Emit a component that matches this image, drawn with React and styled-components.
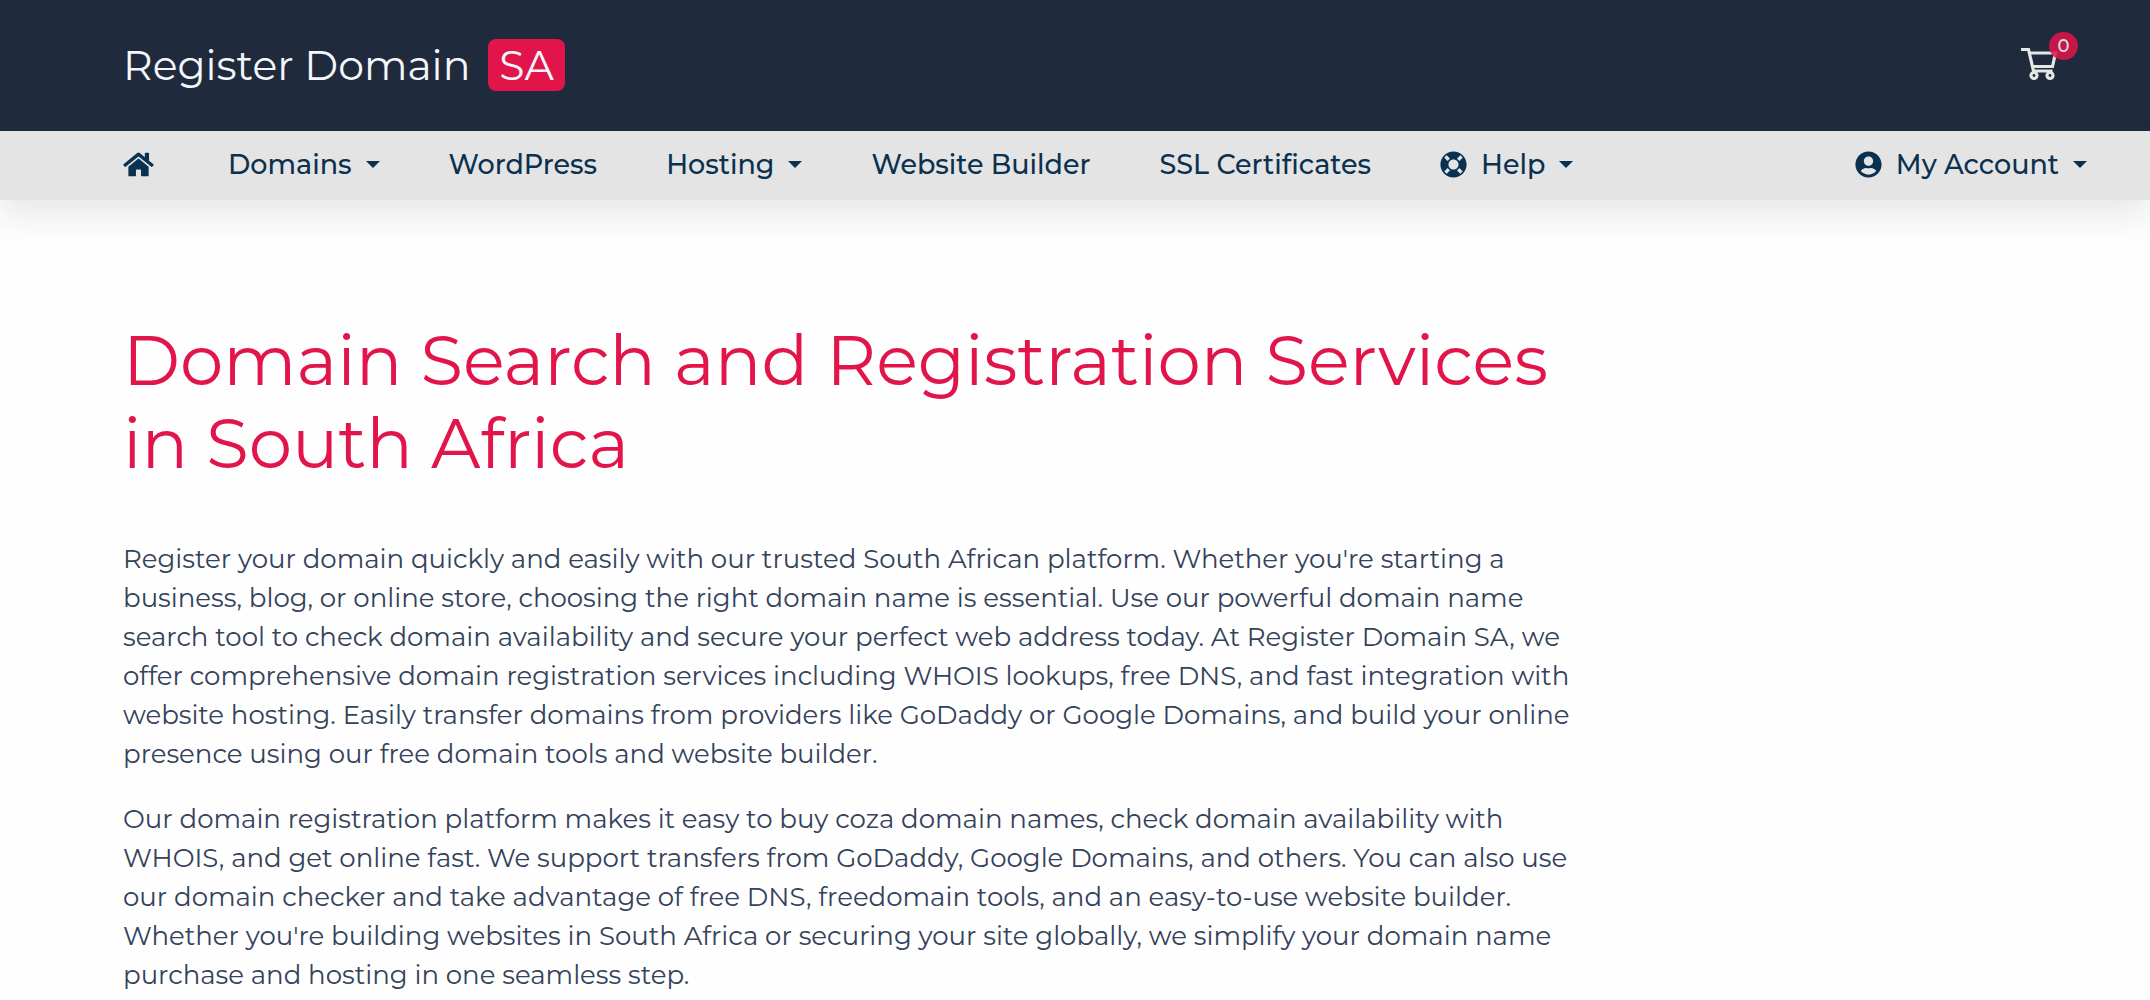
import React from 'react';
import styled, { createGlobalStyle } from 'styled-components';
import { FaHome, FaLifeRing, FaUserCircle } from 'react-icons/fa';

const PRIMARY = '#e2154b';
const DARK = '#1f2a3c';
const NAV_TEXT = '#0a3150';

const GlobalStyle = createGlobalStyle`
  * {
    box-sizing: border-box;
  }
  body {
    margin: 0;
    background: #fefefe;
    color: #34425a;
    font-family: Montserrat, Inter, 'Liberation Sans', sans-serif;
  }
`;

const TopBar = styled.header`
  display: flex;
  align-items: center;
  justify-content: space-between;
  padding: 39px 72px 40px 123px;
  background: ${DARK};
`;

const Logo = styled.a`
  display: flex;
  align-items: center;
  gap: 18px;
  color: #f3f6fa;
  font-size: 41px;
  font-weight: 400;
  line-height: 52px;
  text-decoration: none;
`;

const LogoTag = styled.span`
  padding: 0 11px;
  border-radius: 8px;
  background: ${PRIMARY};
`;

const CartLink = styled.a`
  position: relative;
  display: flex;
  padding-right: 20px;
  color: #e6e6e6;
`;

const CartBadge = styled.span`
  position: absolute;
  top: -16px;
  right: 0;
  width: 29px;
  height: 28px;
  border-radius: 50%;
  background: ${PRIMARY};
  opacity: 0.85;
  color: #fff;
  font-size: 18px;
  font-weight: 500;
  line-height: 28px;
  text-align: center;
`;

const NavBar = styled.nav`
  display: flex;
  align-items: center;
  justify-content: space-between;
  padding: 0 63px 2px 123px;
  background: #e4e4e4;
  box-shadow: 0 16px 32px rgba(31, 42, 60, 0.1);
`;

const NavList = styled.ul`
  display: flex;
  align-items: center;
  gap: 69px;
  margin: 0;
  padding: 0;
  list-style: none;
`;

const navItem = `
  display: flex;
  align-items: center;
  gap: 14px;
  padding: 0;
  border: 0;
  background: none;
  color: ${NAV_TEXT};
  font-family: inherit;
  font-size: 27px;
  font-weight: 500;
  line-height: 67px;
  white-space: nowrap;
  text-decoration: none;
  cursor: pointer;
`;

const NavLink = styled.a`${navItem}`;

const NavToggle = styled.button`${navItem}`;

const HomeLink = styled(NavLink)`
  padding-right: 5px;
  svg {
    width: 31px;
  }
`;

const Caret = styled.span`
  border-top: 7px solid;
  border-right: 7px solid transparent;
  border-left: 7px solid transparent;
`;

const Content = styled.main`
  max-width: 1580px;
  padding: 119px 0 0 123px;
`;

const Title = styled.h1`
  margin: 0 0 55px;
  color: ${PRIMARY};
  font-size: 69px;
  font-weight: 400;
  line-height: 83px;
`;

const Text = styled.p`
  margin: 0 0 26px;
  font-size: 26px;
  line-height: 39px;
`;

const CartIcon = () => (
  <svg width="37" height="34" viewBox="0 0 37 34" fill="none" stroke="currentColor" strokeWidth="3.2">
    <path d="M0 1.5h7.5l5 21.500h19" />
    <path d="M9 5h25.500l-3 13.500H12" />
    <circle cx="13" cy="27.500" r="3" />
    <circle cx="29" cy="27.500" r="3" />
  </svg>
);

const NAV_ITEMS = [
  { label: 'Domains', menu: true },
  { label: 'WordPress' },
  { label: 'Hosting', menu: true },
  { label: 'Website Builder' },
  { label: 'SSL Certificates' },
  { label: 'Help', menu: true, icon: FaLifeRing },
];

const NavEntry = ({ label, menu, icon: Icon }) => {
  if (!menu) {
    return <NavLink href="#">{label}</NavLink>;
  }
  return <NavToggle type="button">
    {Icon && <Icon />}
    {label}
    <Caret />
  </NavToggle>;
};

const App = () => {
  return <>
    <GlobalStyle />
    <TopBar>
      <Logo href="#">Register Domain <LogoTag>SA</LogoTag></Logo>
      <CartLink href="#" aria-label="Cart">
        <CartIcon />
        <CartBadge>0</CartBadge>
      </CartLink>
    </TopBar>
    <NavBar>
      <NavList>
        <li><HomeLink href="#" aria-label="Home"><FaHome /></HomeLink></li>
        {NAV_ITEMS.map((item) => <li key={item.label}><NavEntry {...item} /></li>)}
      </NavList>
      <NavEntry label="My Account" menu icon={FaUserCircle} />
    </NavBar>
    <Content>
      <Title>Domain Search and Registration Services in South Africa</Title>
      <Text>
        Register your domain quickly and easily with our trusted South African platform. Whether you're starting a
        business, blog, or online store, choosing the right domain name is essential. Use our powerful domain name
        search tool to check domain availability and secure your perfect web address today. At Register Domain SA, we
        offer comprehensive domain registration services including WHOIS lookups, free DNS, and fast integration with
        website hosting. Easily transfer domains from providers like GoDaddy or Google Domains, and build your online
        presence using our free domain tools and website builder.
      </Text>
      <Text>
        Our domain registration platform makes it easy to buy coza domain names, check domain availability with
        WHOIS, and get online fast. We support transfers from GoDaddy, Google Domains, and others. You can also use
        our domain checker and take advantage of free DNS, freedomain tools, and an easy-to-use website builder.
        Whether you're building websites in South Africa or securing your site globally, we simplify your domain name
        purchase and hosting in one seamless step.
      </Text>
    </Content>
  </>;
};

export default App;
